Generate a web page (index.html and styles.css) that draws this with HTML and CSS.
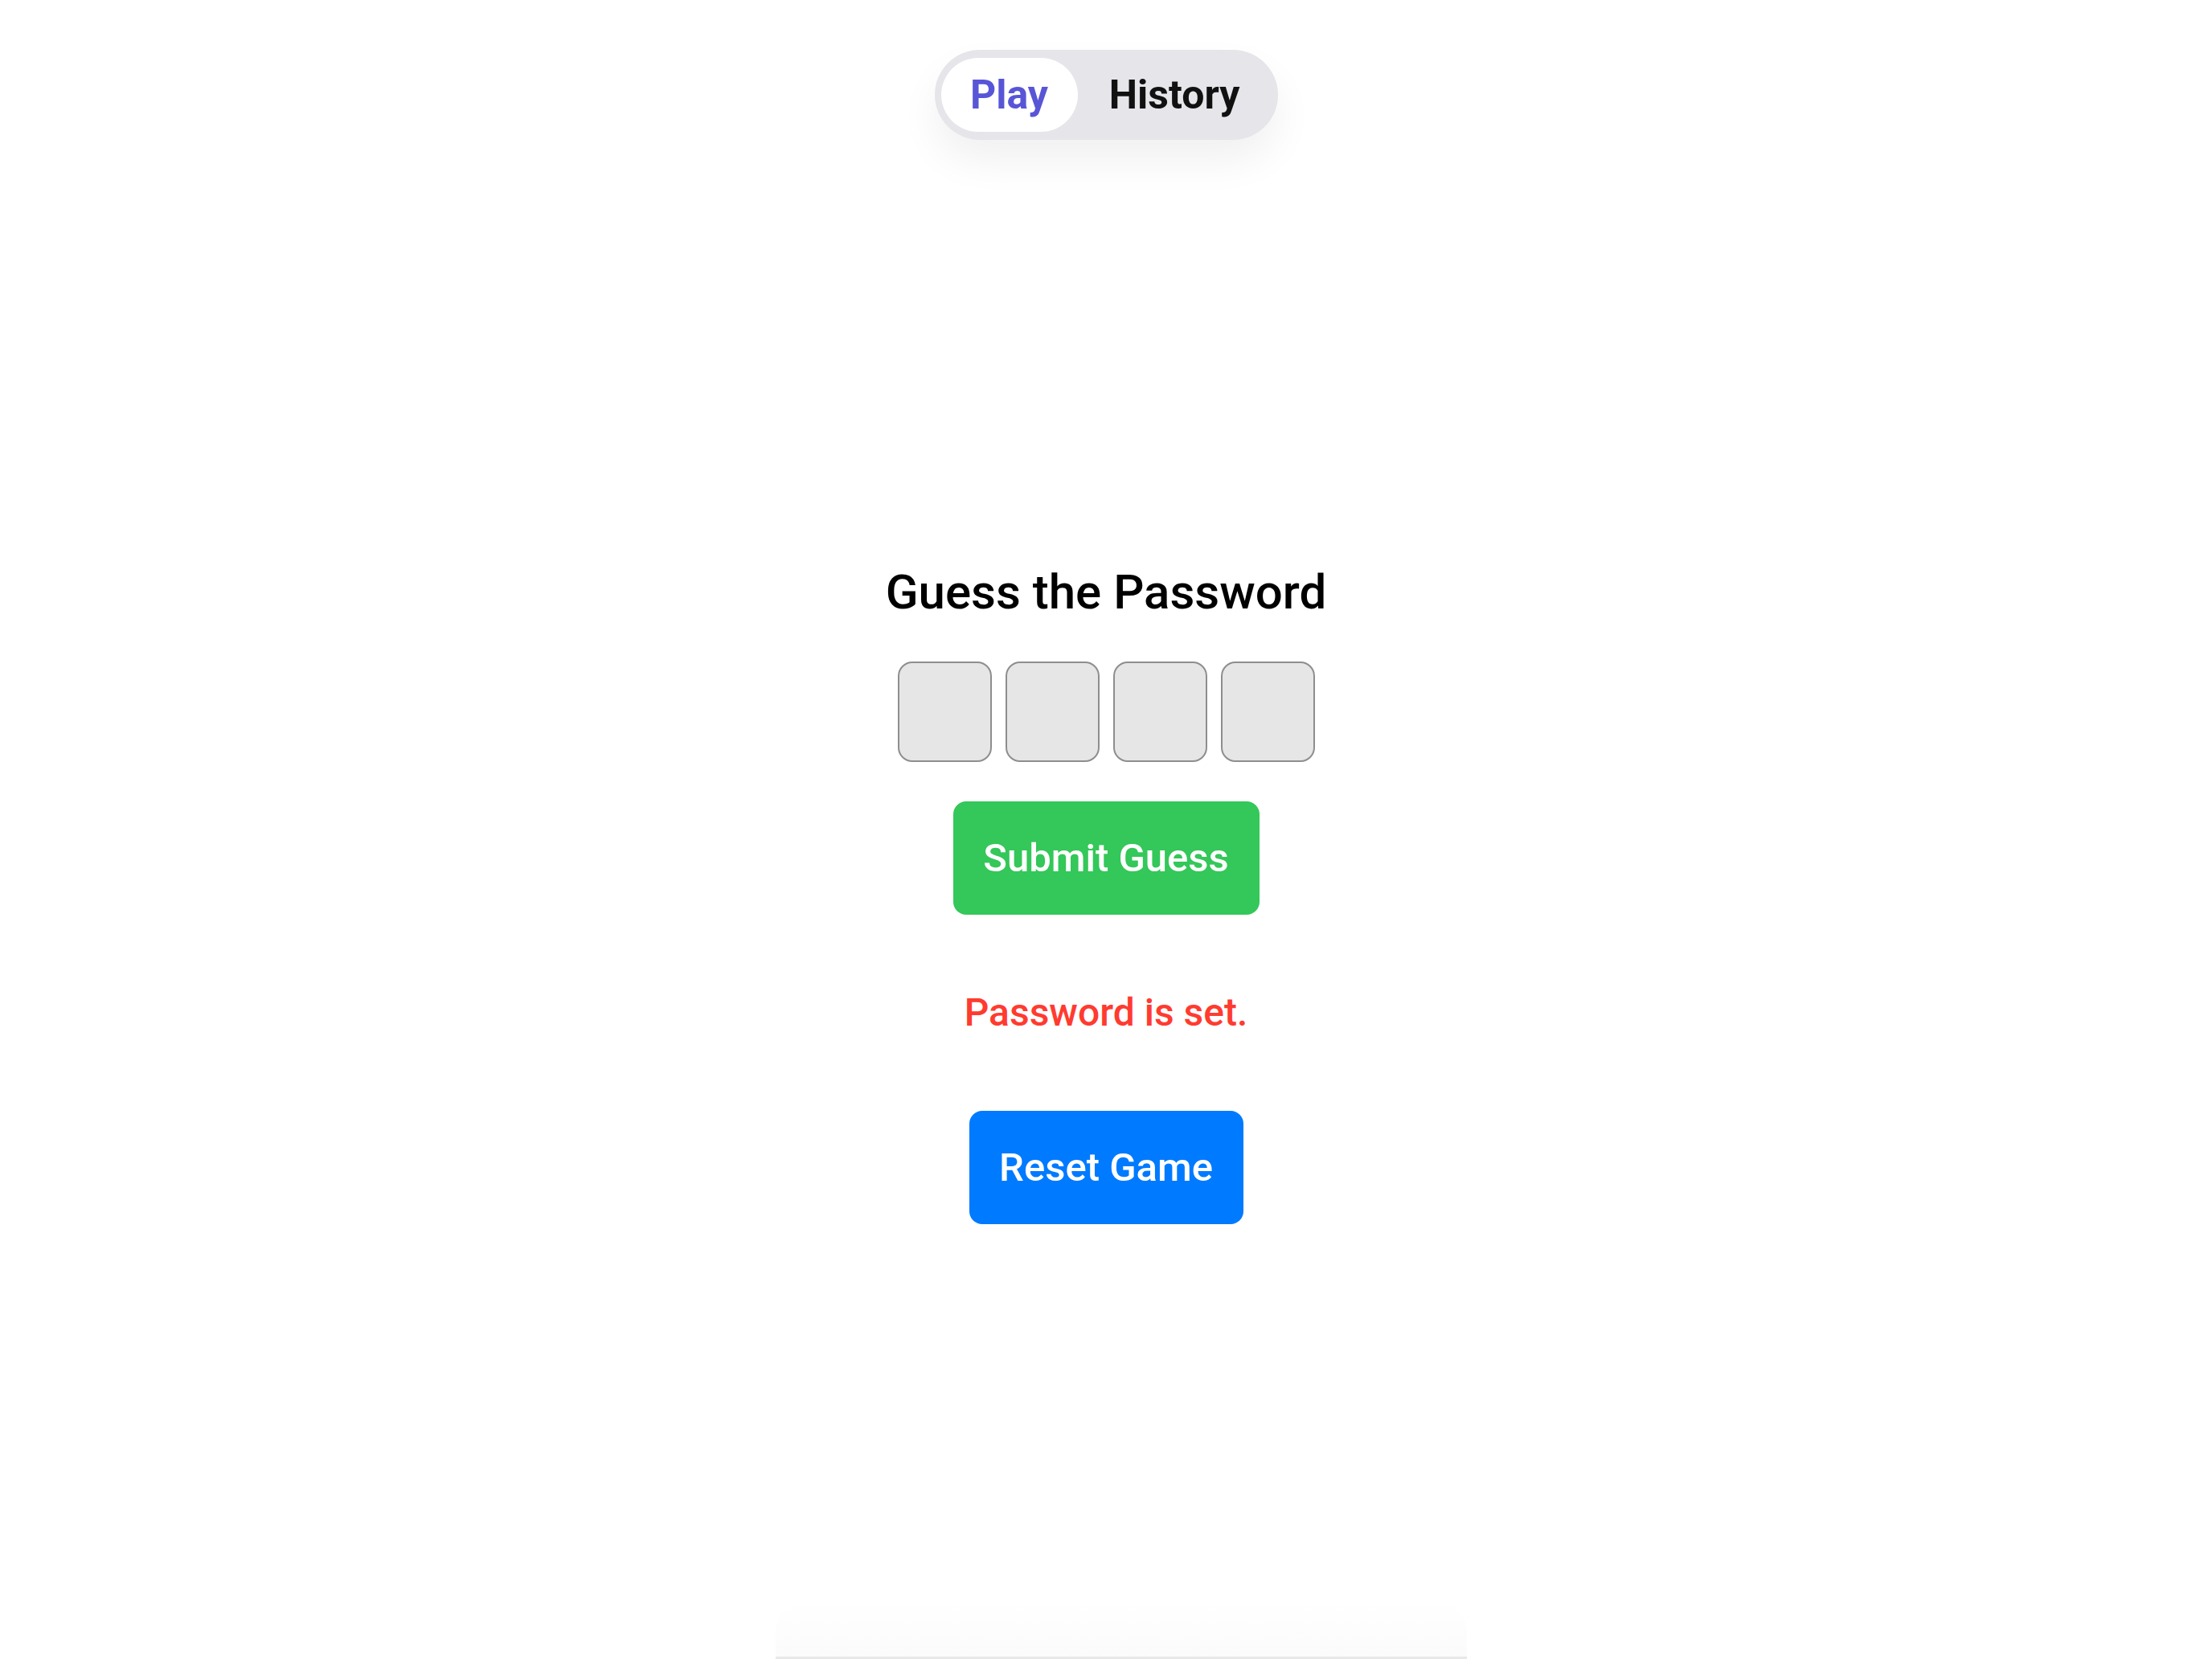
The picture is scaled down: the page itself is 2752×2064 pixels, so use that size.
FILE: index.html
```html
<!DOCTYPE html>
<html lang="en">
<head>
<meta charset="utf-8">
<title>Guess the Password</title>
<link rel="stylesheet" href="styles.css">
</head>
<body>
<div class="app">
  <nav class="tabs">
    <div class="tab tab-play">Play</div>
    <div class="tab tab-history">History</div>
  </nav>
  <main class="game">
    <h1 class="title">Guess the Password</h1>
    <div class="boxes">
      <div class="box"></div>
      <div class="box"></div>
      <div class="box"></div>
      <div class="box"></div>
    </div>
    <button class="btn btn-submit">Submit Guess</button>
    <p class="status">Password is set.</p>
    <button class="btn btn-reset">Reset Game</button>
  </main>
  <div class="home-shade"></div>
</div>
</body>
</html>
```
FILE: styles.css
```css
html, body {
  margin: 0;
  padding: 0;
  background: #ffffff;
}
body {
  font-family: Roboto, "Noto Sans", "Liberation Sans", sans-serif;
  color: #000;
}
.app {
  min-height: 2064px;
  display: flex;
  flex-direction: column;
  align-items: center;
}
.tabs {
  margin-top: 62px;
  display: flex;
  padding: 10px 8px;
  background: #e5e5ea;
  border-radius: 56px;
  box-shadow: 0 26px 50px rgba(0, 0, 0, 0.06);
}
.tab {
  height: 92px;
  display: flex;
  align-items: center;
  justify-content: center;
  font-size: 50px;
  font-weight: 700;
  border-radius: 46px;
}
.tab-play {
  width: 170px;
  background: #ffffff;
  color: #5856d6;
}
.tab-history {
  width: 241px;
  color: #111111;
}
.game {
  margin-top: 528px;
  display: flex;
  flex-direction: column;
  align-items: center;
}
.title {
  margin: 0;
  font-size: 60px;
  line-height: 70px;
  font-weight: 500;
  color: #000;
}
.boxes {
  margin-top: 51px;
  display: flex;
  gap: 17px;
}
.box {
  width: 117px;
  height: 125px;
  box-sizing: border-box;
  border: 2.5px solid #8e8e8e;
  border-radius: 18px;
  background: #e6e6e6;
}
.btn {
  border: none;
  height: 141px;
  border-radius: 16px;
  color: #ffffff;
  font-family: Roboto, "Noto Sans", "Liberation Sans", sans-serif;
  font-size: 49px;
  font-weight: 500;
  display: flex;
  align-items: center;
  justify-content: center;
  padding: 0;
}
.btn-submit {
  margin-top: 49px;
  width: 381px;
  background: #34c759;
}
.status {
  margin: 94px 0 0;
  font-size: 48px;
  line-height: 56px;
  font-weight: 500;
  color: #ff3b30;
}
.btn-reset {
  margin-top: 94px;
  width: 341px;
  background: #007aff;
}
.home-shade {
  position: fixed;
  left: 965px;
  bottom: 0;
  width: 860px;
  height: 70px;
  background: linear-gradient(#ffffff, #fbfbfb);
  border-radius: 40px 40px 0 0;
  border-bottom: 3px solid #e8e8e8;
}
```
